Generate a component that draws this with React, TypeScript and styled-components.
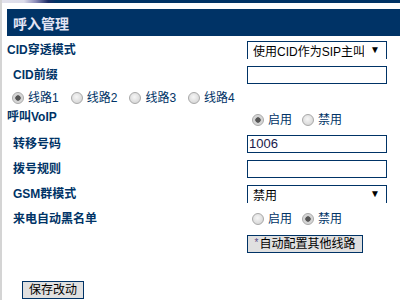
import React from "react";
import styled, { createGlobalStyle } from "styled-components";

const FONT = `"Liberation Sans", "Noto Sans CJK SC", sans-serif`;
const NAVY = "#003366";

const GlobalStyle = createGlobalStyle`
  html, body {
    margin: 0;
    padding: 0;
    background: #fff;
    font-family: ${FONT};
  }
`;

const Page = styled.div`
  width: 400px;
  height: 300px;
  box-sizing: border-box;
  border-left: 2px solid #d4d4d4;
  overflow: hidden;
`;

const TopStrip = styled.div`
  height: 3px;
  background: linear-gradient(
    90deg,
    #e2e2ec 0,
    #dcdcea 22px,
    #8a8ab8 34px,
    #1c2c66 46px,
    ${NAVY} 54px
  );
`;

const Content = styled.div`
  padding-left: 5px;
`;

const Header = styled.div`
  margin-top: 6px;
  height: 27px;
  background: ${NAVY};
  color: #e4e4f4;
  font-size: 14px;
  font-weight: bold;
  padding-left: 6px;
  display: flex;
  align-items: center;
`;

const Form = styled.div`
  padding-top: 1px;
`;

const Row = styled.div<{ h?: number }>`
  display: grid;
  grid-template-columns: 240px 150px;
  height: ${(p) => p.h ?? 25}px;
  align-items: center;
`;

const Label = styled.div<{ indent?: boolean; top?: boolean }>`
  font-size: 12px;
  font-weight: bold;
  color: ${NAVY};
  padding-left: ${(p) => (p.indent ? 6 : 0)}px;
  align-self: ${(p) => (p.top ? "start" : "center")};
  padding-top: ${(p) => (p.top ? 1 : 0)}px;
  line-height: 14px;
  white-space: nowrap;
`;

const LinesRow = styled.div`
  height: 22px;
  display: flex;
  align-items: center;
  padding-left: 5px;
`;

const RadioGroup = styled.div<{ gap: number; inset?: number }>`
  display: flex;
  align-items: center;
  gap: ${(p) => p.gap}px;
  padding-left: ${(p) => p.inset ?? 0}px;
`;

const RadioItem = styled.label`
  display: flex;
  align-items: center;
  gap: 4px;
  font-size: 12px;
  color: ${NAVY};
  line-height: 14px;
`;

const Radio = styled.input.attrs({ type: "radio" })`
  appearance: none;
  margin: 0;
  width: 12px;
  height: 12px;
  border-radius: 50%;
  border: 1px solid #a8a8a8;
  box-sizing: border-box;
  background: radial-gradient(circle at 45% 40%, #f6f6f6 0, #d6d6d6 80%);

  &:checked {
    background: radial-gradient(
      circle,
      #555 0,
      #555 2.4px,
      #d0d0d0 3px,
      #e4e4e4 100%
    );
  }
`;

const TextInput = styled.input`
  width: 140px;
  height: 18px;
  box-sizing: border-box;
  border: 1px solid ${NAVY};
  padding: 0 1px;
  margin: 0;
  font-family: ${FONT};
  font-size: 13px;
  color: #1a1a4a;
  outline: none;
`;

const SelectBox = styled.div`
  position: relative;
  width: 140px;
  height: 18px;
  box-sizing: border-box;
  border: 1px solid ${NAVY};
`;

const Select = styled.select`
  appearance: none;
  width: 100%;
  height: 100%;
  border: none;
  margin: 0;
  padding: 0 22px 0 5px;
  background: #fff;
  font-family: ${FONT};
  font-size: 12px;
  color: #000;
  outline: none;
`;

const Arrow = styled.span`
  position: absolute;
  right: 6px;
  top: 2px;
  font-size: 10px;
  line-height: 12px;
  color: #000;
  pointer-events: none;
`;

const FlatButton = styled.button<{ w: number }>`
  width: ${(p) => p.w}px;
  height: 18px;
  box-sizing: border-box;
  border: 1px solid ${NAVY};
  background: #e0e0e0;
  margin: 0;
  padding: 0;
  font-family: ${FONT};
  font-size: 12px;
  color: #000;
  line-height: 14px;
  display: flex;
  align-items: center;
  justify-content: center;
`;

const Star = styled.span`
  font-size: 10px;
  line-height: 10px;
  color: #5a4e8a;
  align-self: flex-start;
  margin-top: 2px;
  margin-right: 1px;
`;

const SaveArea = styled.div`
  padding: 25px 0 0 15px;
`;

const Dropdown = ({ value, options }: { value: string; options: string[] }) => (
  <SelectBox>
    <Select defaultValue={value}>
      {options.map((o) => (
        <option key={o}>{o}</option>
      ))}
    </Select>
    <Arrow>▼</Arrow>
  </SelectBox>
);

const EnableRadios = ({ name, on }: { name: string; on: boolean }) => (
  <RadioGroup gap={10} inset={5}>
    <RadioItem>
      <Radio name={name} defaultChecked={on} />
      启用
    </RadioItem>
    <RadioItem>
      <Radio name={name} defaultChecked={!on} />
      禁用
    </RadioItem>
  </RadioGroup>
);

export default function App() {
  const lines = ["线路1", "线路2", "线路3", "线路4"];
  return (
    <Page>
      <GlobalStyle />
      <TopStrip />
      <Content>
        <Header>呼入管理</Header>
        <Form>
          <Row>
            <Label>CID穿透模式</Label>
            <Dropdown
              value="使用CID作为SIP主叫号码"
              options={["使用CID作为SIP主叫号码", "禁用"]}
            />
          </Row>
          <Row>
            <Label indent>CID前缀</Label>
            <TextInput />
          </Row>
          <LinesRow>
            <RadioGroup gap={12}>
              {lines.map((l, i) => (
                <RadioItem key={l}>
                  <Radio name="line" defaultChecked={i === 0} />
                  {l}
                </RadioItem>
              ))}
            </RadioGroup>
          </LinesRow>
          <Row h={22}>
            <Label top>呼叫VoIP</Label>
            <EnableRadios name="voip" on />
          </Row>
          <Row>
            <Label indent>转移号码</Label>
            <TextInput defaultValue="1006" />
          </Row>
          <Row>
            <Label indent>拨号规则</Label>
            <TextInput />
          </Row>
          <Row>
            <Label indent>GSM群模式</Label>
            <Dropdown value="禁用" options={["禁用", "启用"]} />
          </Row>
          <Row>
            <Label indent>来电自动黑名单</Label>
            <EnableRadios name="blacklist" on={false} />
          </Row>
          <Row>
            <span />
            <FlatButton w={116}>
              <Star>*</Star>自动配置其他线路
            </FlatButton>
          </Row>
        </Form>
        <SaveArea>
          <FlatButton w={62}>保存改动</FlatButton>
        </SaveArea>
      </Content>
    </Page>
  );
}
